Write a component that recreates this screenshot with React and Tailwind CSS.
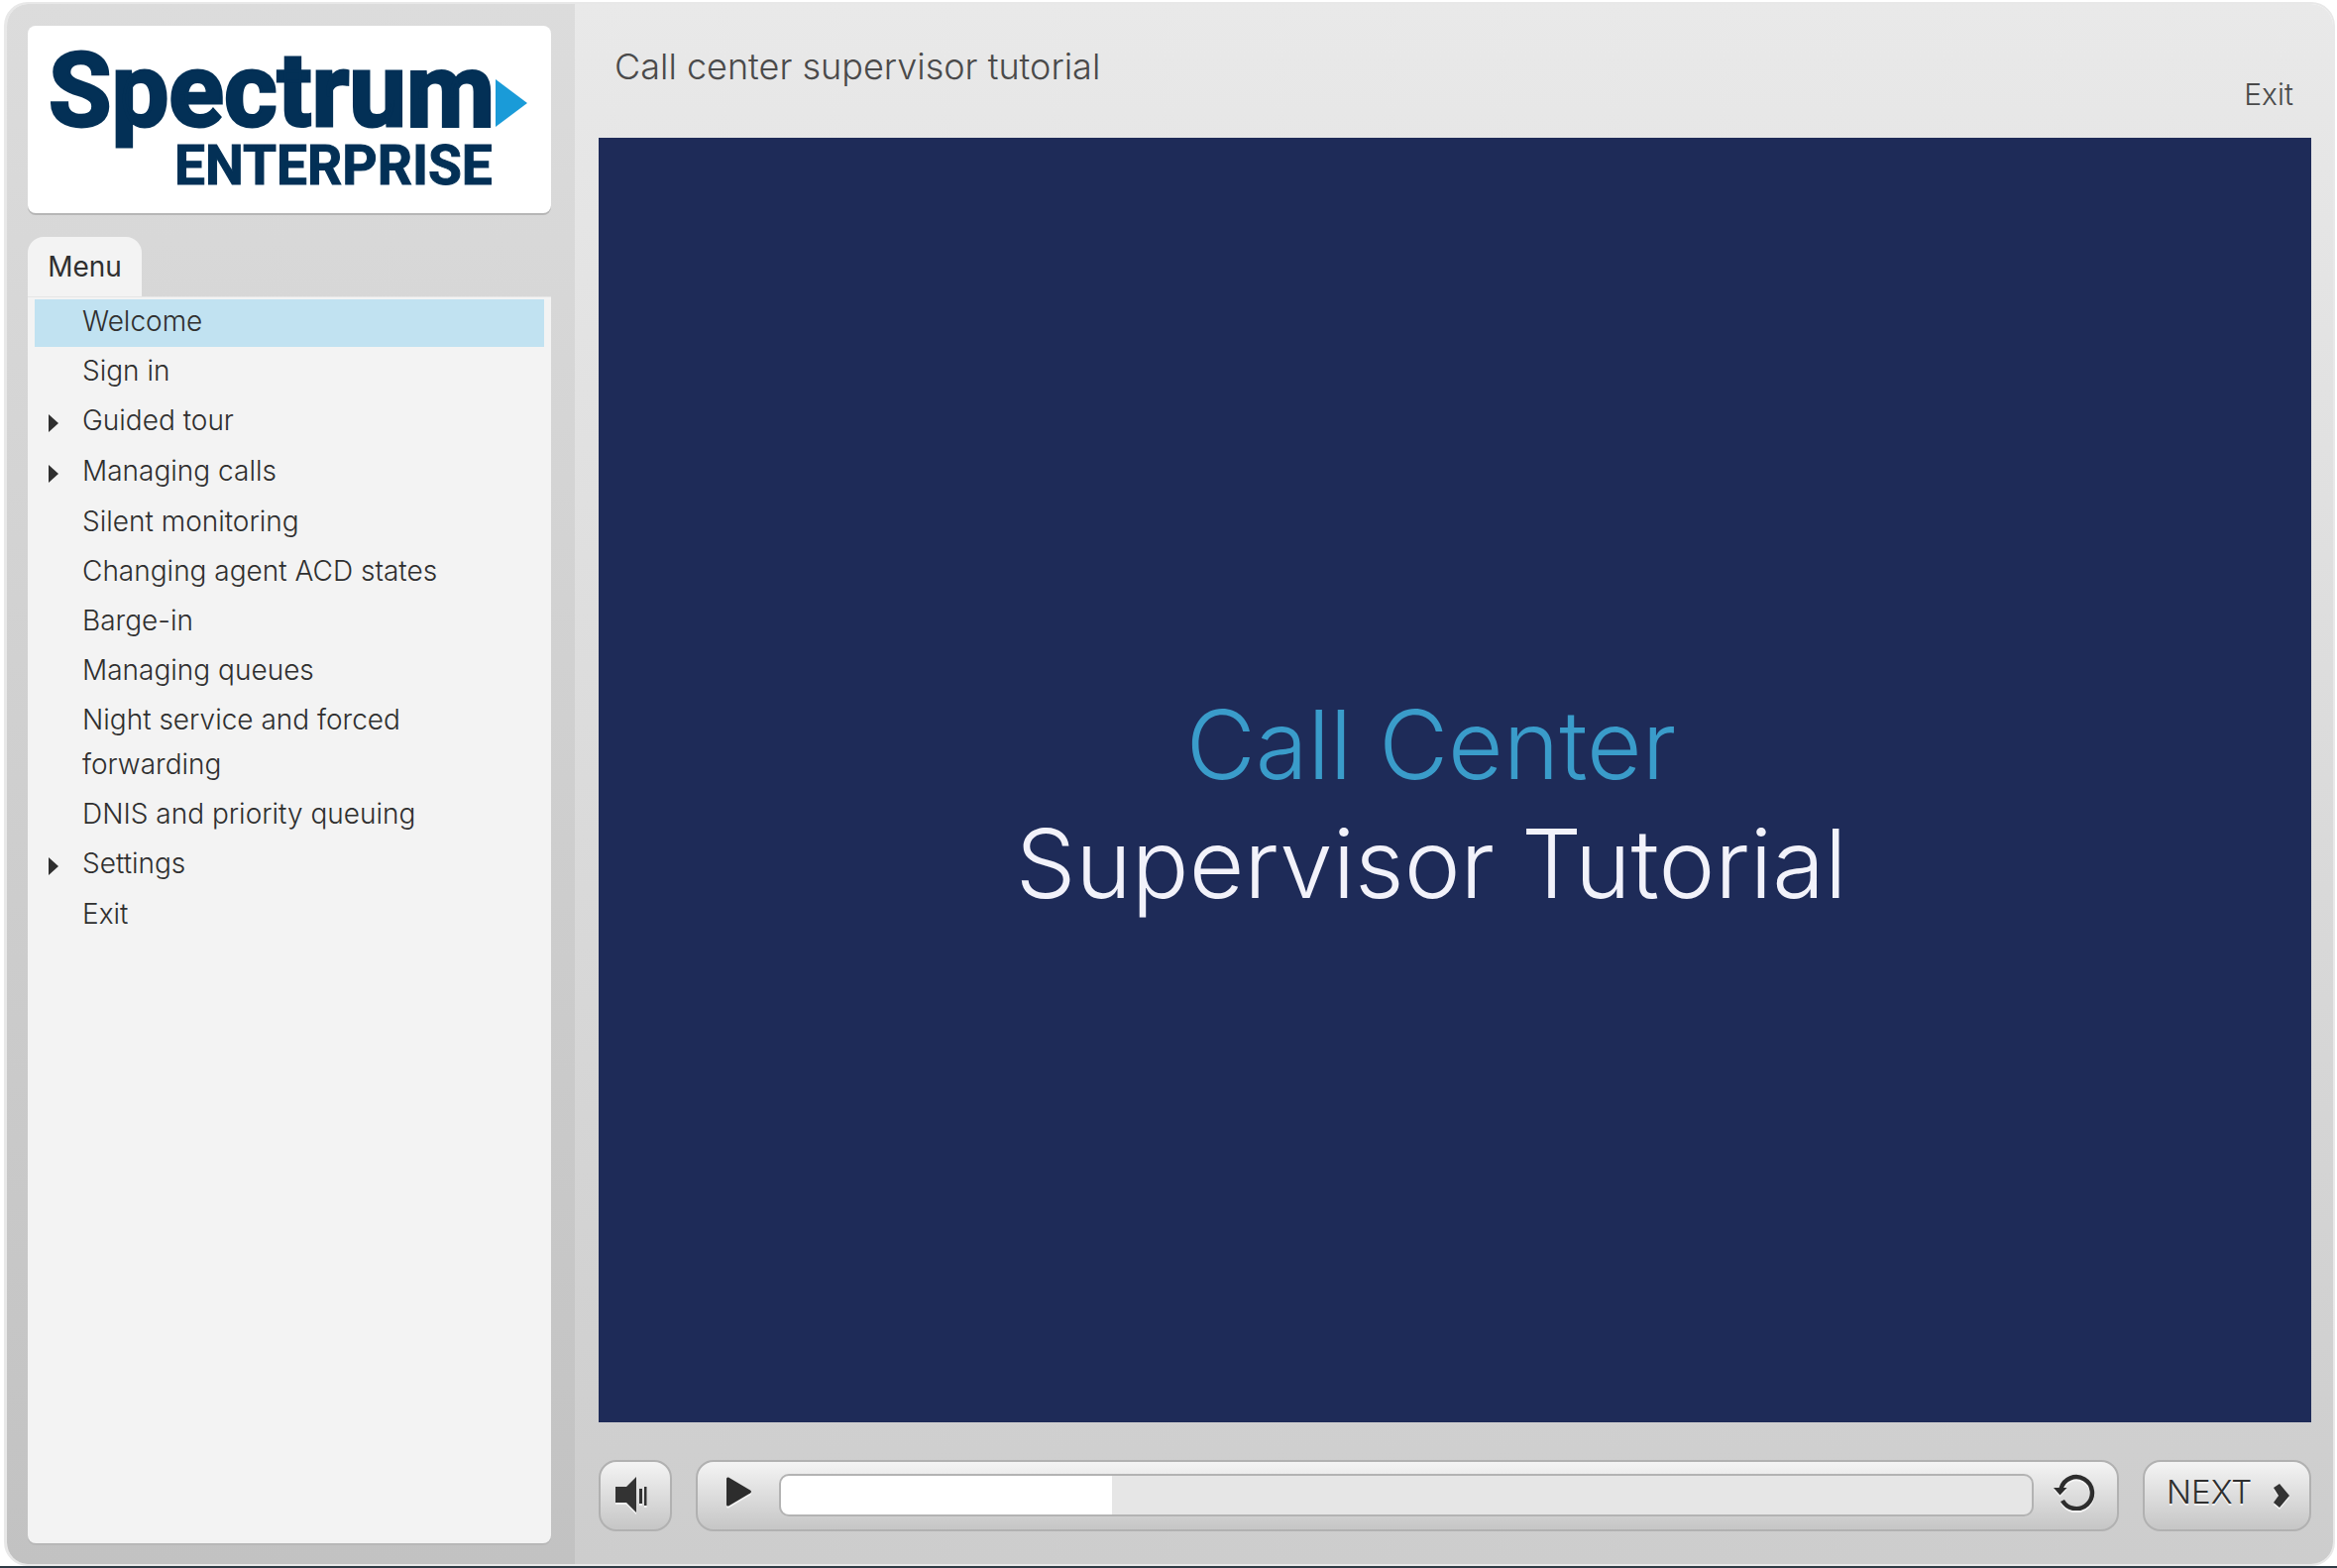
import { useState } from "react";

const MENU_ITEMS = [
  { label: "Welcome" },
  { label: "Sign in" },
  { label: "Guided tour", expandable: true },
  { label: "Managing calls", expandable: true },
  { label: "Silent monitoring" },
  { label: "Changing agent ACD states" },
  { label: "Barge-in" },
  { label: "Managing queues" },
  { label: "Night service and forced forwarding" },
  { label: "DNIS and priority queuing" },
  { label: "Settings", expandable: true },
  { label: "Exit" },
];

const CONTROL =
  "rounded-[18px] border-2 border-[#b1b1b1] bg-linear-to-b from-[#f4f4f4] to-[#c6c6c6]";

function Logo() {
  return (
    <svg
      viewBox="0 0 528 189"
      className="block w-full"
      role="img"
      aria-label="Spectrum Enterprise"
      fontFamily="Roboto, sans-serif"
      fontWeight="700"
      fill="#033056"
    >
      <text x="21" y="101" fontSize="103" stroke="#033056" strokeWidth="3">
        Spectrum
      </text>
      <text x="148" y="160" fontSize="55" stroke="#033056" strokeWidth="1">
        ENTERPRISE
      </text>
      <path d="M472 54 L504 78 L472 102 Z" fill="#1a9bd8" />
    </svg>
  );
}

function MenuItem({ label, expandable, selected, onSelect }) {
  return (
    <li className={expandable ? "pb-[3px]" : "pb-0.5"}>
      <button
        type="button"
        onClick={onSelect}
        aria-current={selected ? "page" : undefined}
        className={`flex w-full items-center pl-3.5 pr-12 text-left ${
          selected ? "bg-[#c1e2f1]" : ""
        }`}
      >
        <span className="w-[34px] shrink-0">
          {expandable && (
            <svg viewBox="0 0 10 18" className="mt-0.5 h-[18px] w-2.5" fill="#2f2f2f" aria-hidden="true">
              <path d="M0 0 L10 9 L0 18 Z" />
            </svg>
          )}
        </span>
        <span className="pb-[3px] leading-[45px]">{label}</span>
      </button>
    </li>
  );
}

function Sidebar() {
  const [selected, setSelected] = useState("Welcome");
  return (
    <aside className="flex w-[573px] shrink-0 flex-col bg-linear-to-b from-[#dcdcdc] to-[#c2c2c2] pt-[22px] pr-6 pb-[21px] pl-[21px]">
      <div className="rounded-lg bg-white shadow-[0_2px_0_#b6b6b6]">
        <Logo />
      </div>
      <h2 className="mt-6 flex h-[60px] w-[115px] items-center justify-center rounded-t-2xl bg-[#f3f3f3] text-[28px] text-[#2f2f2f]">
        Menu
      </h2>
      <nav
        aria-label="Menu"
        className="flex-1 rounded-b-lg border-t border-[#e6e6e6] bg-[#f3f3f3] px-[7px] pt-0.5 text-[28px] font-light text-[#2f2f2f] shadow-[0_2px_0_#b8b8b8]"
      >
        <ul>
          {MENU_ITEMS.map((item) => (
            <MenuItem
              key={item.label}
              {...item}
              selected={item.label === selected}
              onSelect={() => setSelected(item.label)}
            />
          ))}
        </ul>
      </nav>
    </aside>
  );
}

function Controls() {
  const [position, setPosition] = useState(265);
  const filled = position / 10;
  return (
    <div className="mt-[38px] flex h-[72px] gap-6 text-[#2f2f2f]">
      <button type="button" aria-label="Volume" className={`flex w-[74px] shrink-0 items-center pl-[15px] ${CONTROL}`}>
        <svg viewBox="0 0 32 36" className="mb-0.5 h-9 w-8 drop-shadow-[0_2px_0_#f4f4f4]" fill="#333333" aria-hidden="true">
          <path d="M0 10 H11 L21 0 V36 L11 26 H0 Z" />
          <path d="M24 12 H27 V27 H24 Z M29 10 H31.500 V29 H29 Z" />
        </svg>
      </button>
      <div className={`flex flex-1 items-center pr-[22px] pl-[29px] ${CONTROL}`}>
        <button type="button" aria-label="Play" className="mb-2 shrink-0">
          <svg viewBox="0 0 25 30" className="h-[30px] w-[25px] drop-shadow-[0_2px_0_#f4f4f4]" fill="#2d2d2d" aria-hidden="true">
            <path d="M0 2 Q0 0 2 0.500 L24 13.500 Q26 15 24 16.500 L2 29.500 Q0 30 0 28 Z" />
          </svg>
        </button>
        <input
          type="range"
          aria-label="Seek"
          min="0"
          max="1000"
          value={position}
          onChange={(e) => setPosition(Number(e.target.value))}
          className="mb-px ml-7 h-[43px] min-w-0 flex-1 appearance-none rounded-[10px] border-2 border-[#b3b3b3] [&::-webkit-slider-thumb]:size-0 [&::-webkit-slider-thumb]:appearance-none"
          style={{
            background: `linear-gradient(to right, #ffffff ${filled}%, #e6e6e6 ${filled}%)`,
          }}
        />
        <button type="button" aria-label="Replay" className="mb-2 ml-5 shrink-0">
          <svg viewBox="0 0 42 38" className="h-[38px] w-[42px] drop-shadow-[0_2px_0_#f4f4f4]" fill="none" aria-hidden="true">
            <path d="M7.500 16 A16 16 0 1 1 9 28" stroke="#2d2d2d" strokeWidth="4.500" />
            <path d="M0 15 H13.500 L6.500 22.500 Z" fill="#2d2d2d" />
          </svg>
        </button>
      </div>
      <button type="button" className={`flex w-[170px] shrink-0 items-center justify-between pr-5 pb-1.5 pl-[22px] text-[33px] font-light ${CONTROL}`}>
        <span className="[text-shadow:0_2px_0_#f4f4f4]">NEXT</span>
        <svg viewBox="0 0 16 24" className="mt-1.5 h-6 w-4 drop-shadow-[0_2px_0_#f4f4f4]" fill="#333333" aria-hidden="true">
          <path d="M0 4 L6 0 L16 12 L6 24 L0 19 L5 12 Z" />
        </svg>
      </button>
    </div>
  );
}

export default function App() {
  return (
    <div className="flex h-screen flex-col border-b-2 border-[#2f3b45] bg-white pt-0.5 pr-0.5 pl-1 font-['Inter',sans-serif]">
      <div className="flex min-h-0 flex-1 overflow-hidden rounded-3xl border-2 border-l-3 border-[#e8e8e8]">
        <Sidebar />
        <main className="flex min-w-0 flex-1 flex-col bg-linear-to-b from-[#e9e9e9] to-[#cdcdcd] pr-[22px] pb-[33px] pl-6">
          <header className="flex h-[135px] shrink-0 justify-between pr-[18px] pl-4 font-light text-[#4a4a4a]">
            <h1 className="pt-10 text-[36px] leading-[46px]">Call center supervisor tutorial</h1>
            <a href="#exit" className="pt-[71px] text-[30px] leading-10">
              Exit
            </a>
          </header>
          <section
            aria-label="Slide"
            className="flex min-h-0 flex-1 flex-col items-center justify-center bg-[#1e2b58] pt-12 pr-12 text-[96px] leading-[120px] font-light"
          >
            <p className="text-[#3a9cca]">Call Center</p>
            <p className="text-[#f2f2fa]">Supervisor Tutorial</p>
          </section>
          <Controls />
        </main>
      </div>
    </div>
  );
}
